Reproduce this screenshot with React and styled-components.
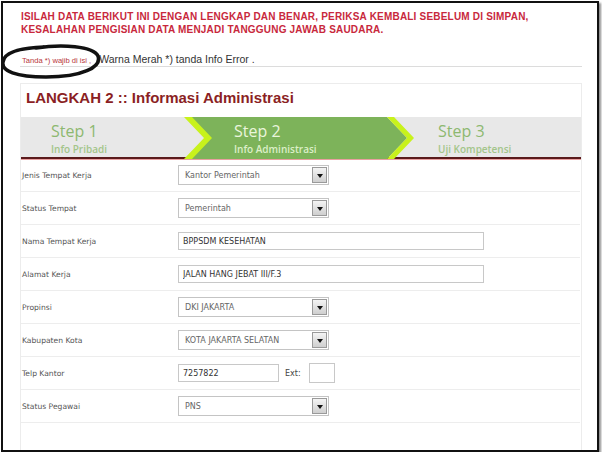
import React from "react";
import styled, { createGlobalStyle } from "styled-components";

const GlobalStyle = createGlobalStyle`
  html, body { margin: 0; padding: 0; background: #fff; }
  body { font-family: "Liberation Sans", Arial, sans-serif; }
  * { box-sizing: border-box; }
`;

const Frame = styled.div`
  position: relative;
  width: 598px;
  height: 451px;
  margin: 1px 0 0 1px;
  border: 2px solid #111;
  box-shadow: 2px 2px 2px rgba(0, 0, 0, 0.45);
  padding: 7px 15px 0 17px;
  overflow: hidden;
  background: #fff;
`;

const Notice = styled.div`
  padding-left: 1px;
  font: bold 10px/13px "Liberation Sans", Arial, sans-serif;
  color: #c8283c;
  letter-spacing: 0.2px;
`;

const InfoLine = styled.div`
  margin-top: 17px;
  display: flex;
  align-items: baseline;
  gap: 8px;
  padding: 0 0 1px 2px;
  border-bottom: 1px solid #dcdcdc;
  line-height: 13px;
`;

const Required = styled.span`
  font: 7.6px "Liberation Sans", Arial, sans-serif;
  color: #b8363a;
`;

const InfoText = styled.span`
  font: 10.5px "Liberation Sans", Arial, sans-serif;
  color: #333;
`;

const Scribble = styled.svg`
  position: absolute;
  left: -2px;
  top: 37px;
  width: 104px;
  height: 42px;
  pointer-events: none;
`;

const Panel = styled.div`
  margin-top: 16px;
  border: 1px solid #ececec;
  height: 400px;
`;

const Title = styled.h2`
  margin: 0;
  padding: 4px 0 0 5px;
  height: 33px;
  font: bold 15px/20px "Liberation Sans", Arial, sans-serif;
  color: #8b1f24;
`;

const StepBar = styled.div`
  display: flex;
  height: 42px;
  background: #e8e8e8;
  border-bottom: 2px solid #5a1a1c;
  box-shadow: 0 1px 0 #e8a0a0;
`;

const Step = styled.div`
  position: relative;
  width: ${(p) => p.$w}px;
  flex: ${(p) => (p.$grow ? "1" : "none")};
  padding: 3px 0 0 ${(p) => p.$pad}px;
  font-family: "Open Sans", "Noto Sans", sans-serif;
`;

const StepBg = styled.svg`
  position: absolute;
  left: 0;
  top: 0;
  width: 230px;
  height: 42px;
`;

const StepName = styled.div`
  position: relative;
  font-size: 16px;
  line-height: 22px;
  color: ${(p) => (p.$active ? "#eaf5dc" : "#8db870")};
`;

const StepSub = styled.div`
  position: relative;
  font-size: 10px;
  font-weight: 600;
  line-height: 14px;
  color: ${(p) => (p.$active ? "#dcefc8" : "#a3c58a")};
`;

const Row = styled.div`
  display: grid;
  grid-template-columns: 156px 1fr;
  align-items: center;
  height: 33px;
  padding-left: 1px;
  border-bottom: 1px solid #ededed;
  margin-right: 1px;
`;

const Label = styled.div`
  font: 7.6px "DejaVu Sans", Verdana, sans-serif;
  color: #555;
`;

const Field = styled.div`
  display: flex;
  align-items: center;
`;

const SelectBox = styled.div`
  position: relative;
  width: 151px;
  height: 20px;
  border: 1px solid #c4c4c4;
  padding-left: 6px;
  display: flex;
  align-items: center;
  font: 8px "DejaVu Sans", Verdana, sans-serif;
  color: #666;
`;

const ArrowBtn = styled.span`
  position: absolute;
  right: 1px;
  top: 1px;
  width: 15px;
  height: 16px;
  border: 1px solid #9a9a9a;
  background: linear-gradient(#f4f4f4, #cfcfcf);
  display: flex;
  align-items: center;
  justify-content: center;
  &::after {
    content: "";
    border-left: 3.5px solid transparent;
    border-right: 3.5px solid transparent;
    border-top: 4px solid #111;
    margin-top: 2px;
  }
`;

const TextBox = styled.input`
  width: ${(p) => p.$w}px;
  height: ${(p) => p.$h || 18}px;
  border: 1px solid #c8c8c8;
  padding: 0 0 0 4px;
  font: 8px "DejaVu Sans", Verdana, sans-serif;
  color: #333;
  background: #fff;
  outline: none;
`;

const ExtLabel = styled.span`
  margin: 0 8px 0 6px;
  font: 8px "DejaVu Sans", Verdana, sans-serif;
  color: #444;
`;

function Select({ value }) {
  return (
    <SelectBox>
      {value}
      <ArrowBtn />
    </SelectBox>
  );
}

const rows = [
  { label: "Jenis Tempat Kerja", type: "select", value: "Kantor Pemerintah" },
  { label: "Status Tempat", type: "select", value: "Pemerintah" },
  { label: "Nama Tempat Kerja", type: "text", value: "BPPSDM KESEHATAN" },
  { label: "Alamat Kerja", type: "text", value: "JALAN HANG JEBAT III/F.3" },
  { label: "Propinsi", type: "select", value: "DKI JAKARTA" },
  { label: "Kabupaten Kota", type: "select", value: "KOTA JAKARTA SELATAN" },
  { label: "Telp Kantor", type: "phone", value: "7257822" },
  { label: "Status Pegawai", type: "select", value: "PNS" },
];

export default function App() {
  return (
    <>
      <GlobalStyle />
      <Frame>
        <Notice>
          ISILAH DATA BERIKUT INI DENGAN LENGKAP DAN BENAR, PERIKSA KEMBALI SEBELUM DI SIMPAN,
          <br />
          KESALAHAN PENGISIAN DATA MENJADI TANGGUNG JAWAB SAUDARA.
        </Notice>
        <InfoLine>
          <Required>Tanda *) wajib di isi ,</Required>
          <InfoText>Warna Merah *) tanda Info Error .</InfoText>
        </InfoLine>
        <Scribble viewBox="1 40 104 42">
          <path
            d="M36 48 C62 44 93 46 98 56 C102 67 82 77 46 77 C16 77 1 71 3 62 C4 53 18 48 44 47"
            fill="none"
            stroke="#111"
            strokeWidth="3.6"
            strokeLinecap="round"
          />
        </Scribble>
        <Panel>
          <Title>LANGKAH 2 :: Informasi Administrasi</Title>
          <StepBar>
            <Step $w={163} $pad={30}>
              <StepName>Step 1</StepName>
              <StepSub>Info Pribadi</StepSub>
            </Step>
            <Step $w={230} $pad={50}>
              <StepBg viewBox="0 0 230 42">
                <polygon points="7,0 203,0 223,21 203,42 7,42 27,21" fill="#7db35a" />
                <polygon points="0,0 8,0 28,21 8,42 0,42 20,21" fill="#c8f21c" />
                <polygon points="203,0 210,0 230,21 210,42 203,42 223,21" fill="#c8f21c" />
              </StepBg>
              <StepName $active>Step 2</StepName>
              <StepSub $active>Info Administrasi</StepSub>
            </Step>
            <Step $grow $pad={24}>
              <StepName>Step 3</StepName>
              <StepSub>Uji Kompetensi</StepSub>
            </Step>
          </StepBar>
          {rows.map((r) => (
            <Row key={r.label}>
              <Label>{r.label}</Label>
              <Field>
                {r.type === "select" && <Select value={r.value} />}
                {r.type === "text" && <TextBox $w={306} readOnly value={r.value} />}
                {r.type === "phone" && (
                  <>
                    <TextBox $w={101} readOnly value={r.value} />
                    <ExtLabel>Ext:</ExtLabel>
                    <TextBox $w={26} $h={20} readOnly value="" />
                  </>
                )}
              </Field>
            </Row>
          ))}
        </Panel>
      </Frame>
    </>
  );
}
